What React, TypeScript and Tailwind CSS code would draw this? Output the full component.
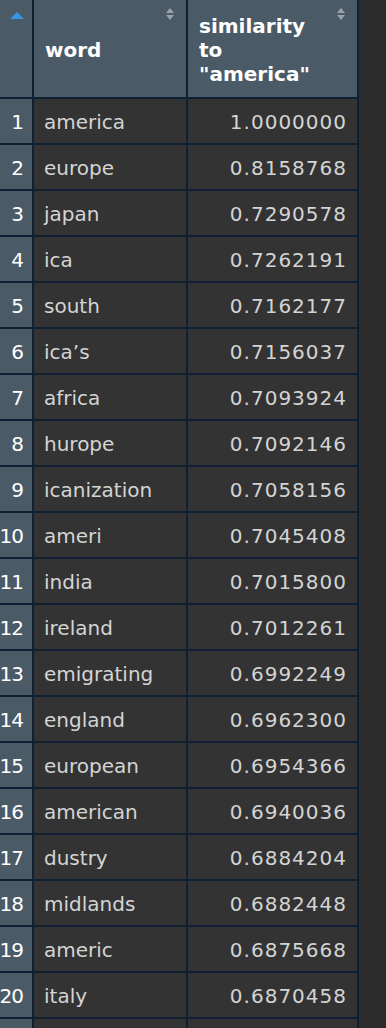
import React from "react";

const rows: [string, string][] = [
  ["america", "1.0000000"],
  ["europe", "0.8158768"],
  ["japan", "0.7290578"],
  ["ica", "0.7262191"],
  ["south", "0.7162177"],
  ["ica’s", "0.7156037"],
  ["africa", "0.7093924"],
  ["hurope", "0.7092146"],
  ["icanization", "0.7058156"],
  ["ameri", "0.7045408"],
  ["india", "0.7015800"],
  ["ireland", "0.7012261"],
  ["emigrating", "0.6992249"],
  ["england", "0.6962300"],
  ["european", "0.6954366"],
  ["american", "0.6940036"],
  ["dustry", "0.6884204"],
  ["midlands", "0.6882448"],
  ["americ", "0.6875668"],
  ["italy", "0.6870458"],
  ["", ""],
];

function SortIcon() {
  return (
    <svg width="10" height="14" viewBox="0 0 10 14" className="absolute right-[11px] top-[7px]">
      <path d="M5 1 L9 6 L1 6 Z" fill="#9aa3ab" />
      <path d="M1 8 L9 8 L5 13 Z" fill="#9aa3ab" />
    </svg>
  );
}

export default function App() {
  return (
    <div
      className="w-[386px] h-[1028px] overflow-hidden bg-[#2c2c2c] flex"
      style={{ fontFamily: '"DejaVu Sans", sans-serif' }}
    >
      <div className="w-[359px] shrink-0 bg-[#0e2134] pr-[2px] grid grid-cols-[32px_152px_169px] gap-[2px] auto-rows-[44px] grid-rows-[97px] content-start">
        {/* header */}
        <div className="relative bg-[#4b5a67]">
          <svg width="14" height="8" viewBox="0 0 14 8" className="absolute left-[10px] top-[12px]">
            <path d="M7 0 L14 7 L0 7 Z" fill="#3794e0" />
          </svg>
        </div>
        <div className="relative bg-[#4b5a67] flex items-center pl-[11px] pt-[2px] text-white font-bold text-[20px] leading-[24px]">
          word
          <SortIcon />
        </div>
        <div className="relative bg-[#4b5a67] flex items-center pl-[11px] pt-[2px] text-white font-bold text-[20px] leading-[24px]">
          <div>
            similarity
            <br />
            to
            <br />
            "america"
          </div>
          <SortIcon />
        </div>

        {rows.map(([word, sim], i) => (
          <React.Fragment key={i}>
            <div className="bg-[#4b5a67] flex items-center justify-end pr-[9px] pt-[1px] text-white text-[20px] tracking-[-1px] overflow-hidden whitespace-nowrap">
              {word ? i + 1 : ""}
            </div>
            <div className="bg-[#333333] flex items-center pl-[10px] pt-[1px] text-[#d4d4d4] text-[20px] whitespace-nowrap">
              {word}
            </div>
            <div className="bg-[#333333] flex items-center justify-end pr-[10px] pt-[1px] text-[#d4d4d4] text-[20px] tracking-[1px] whitespace-nowrap">
              {sim}
            </div>
          </React.Fragment>
        ))}
      </div>
    </div>
  );
}
